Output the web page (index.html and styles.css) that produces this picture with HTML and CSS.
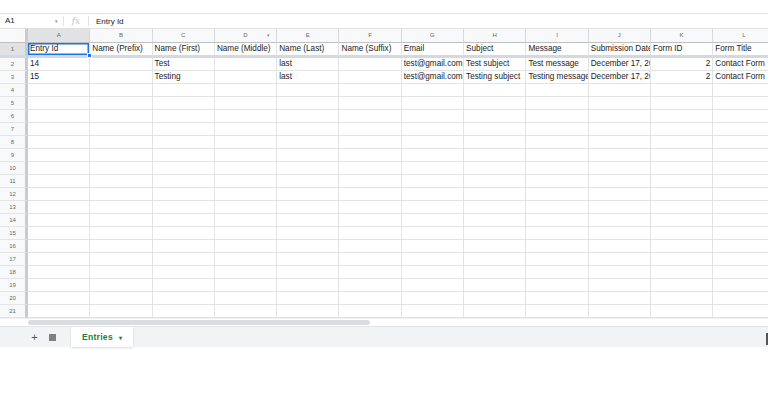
FILE: index.html
```html
<!DOCTYPE html>
<html lang="en">
<head>
    <meta charset="UTF-8">
    <meta name="viewport" content="width=device-width, initial-scale=1.0">
    <title>Entries</title>
    <link rel="stylesheet" href="styles.css">
</head>
<body>
    <div class="app">
        <div class="top-space"></div>
        <div class="formula-bar">
            <div class="name-box">A1<span class="caret">▾</span></div>
            <div class="fx">fx</div>
            <div class="formula">Entry Id</div>
        </div>
        <div class="sheet" id="sheet">
            <div class="corner"></div>
            <div class="col-head active">A</div>
            <div class="col-head">B</div>
            <div class="col-head">C</div>
            <div class="col-head has-filter">D<span class="filter">▾</span></div>
            <div class="col-head">E</div>
            <div class="col-head">F</div>
            <div class="col-head">G</div>
            <div class="col-head">H</div>
            <div class="col-head">I</div>
            <div class="col-head">J</div>
            <div class="col-head">K</div>
            <div class="col-head">L</div>

            <div class="row-head frozen active">1</div>
            <div class="cell frozen selected">Entry Id<span class="handle"></span></div>
            <div class="cell frozen">Name (Prefix)</div>
            <div class="cell frozen">Name (First)</div>
            <div class="cell frozen">Name (Middle)</div>
            <div class="cell frozen">Name (Last)</div>
            <div class="cell frozen">Name (Suffix)</div>
            <div class="cell frozen">Email</div>
            <div class="cell frozen">Subject</div>
            <div class="cell frozen">Message</div>
            <div class="cell frozen">Submission Date</div>
            <div class="cell frozen">Form ID</div>
            <div class="cell frozen">Form Title</div>

            <div class="row-head">2</div>
            <div class="cell">14</div>
            <div class="cell"></div>
            <div class="cell">Test</div>
            <div class="cell"></div>
            <div class="cell">last</div>
            <div class="cell"></div>
            <div class="cell">test@gmail.com</div>
            <div class="cell">Test subject</div>
            <div class="cell">Test message</div>
            <div class="cell">December 17, 2024</div>
            <div class="cell num">2</div>
            <div class="cell">Contact Form</div>

            <div class="row-head">3</div>
            <div class="cell">15</div>
            <div class="cell"></div>
            <div class="cell">Testing</div>
            <div class="cell"></div>
            <div class="cell">last</div>
            <div class="cell"></div>
            <div class="cell">test@gmail.com</div>
            <div class="cell">Testing subject</div>
            <div class="cell">Testing message</div>
            <div class="cell">December 17, 2024</div>
            <div class="cell num">2</div>
            <div class="cell">Contact Form</div>
        </div>
        <div class="scroll-row">
            <div class="scroll-thumb"></div>
        </div>
        <div class="tab-bar">
            <span class="add-sheet">+</span>
            <span class="all-sheets"></span>
            <div class="tab">Entries <span class="tab-caret">▾</span></div>
            <span class="explore"></span>
        </div>
    </div>
    <script>
        const sheet = document.getElementById("sheet");
        for (let r = 4; r <= 22; r++) {
            const head = document.createElement("div");
            head.classList.add("row-head");
            head.textContent = r;
            sheet.appendChild(head);
            for (let c = 0; c < 12; c++) {
                const cell = document.createElement("div");
                cell.classList.add("cell");
                sheet.appendChild(cell);
            }
        }
    </script>
</body>
</html>
```

FILE: styles.css
```css
* {
    margin: 0;
    padding: 0;
    box-sizing: border-box;
}

body {
    font-family: 'Liberation Sans', Arial, sans-serif;
    background: #ffffff;
    color: #222;
    width: 768px;
    height: 393px;
    overflow: hidden;
}

.app {
    display: flex;
    flex-direction: column;
    width: 768px;
}

.top-space {
    height: 13px;
}

.formula-bar {
    display: flex;
    align-items: center;
    height: 15px;
    border-top: 1px solid #e3e3e3;
    font-size: 8px;
    color: #222;
}

.name-box {
    width: 64px;
    padding-left: 5px;
    display: flex;
    justify-content: space-between;
    padding-right: 5px;
    border-right: 1px solid #e3e3e3;
    height: 10px;
    line-height: 10px;
}

.caret {
    font-size: 5px;
    color: #888;
}

.fx {
    width: 25px;
    text-align: center;
    font-family: 'DejaVu Serif', serif;
    font-style: italic;
    font-size: 9px;
    color: #c4c4c4;
    border-right: 1px solid #e3e3e3;
    height: 10px;
    line-height: 10px;
}

.formula {
    padding-left: 7px;
}

.sheet {
    display: grid;
    grid-template-columns: 28px repeat(12, 62.3px);
    grid-template-rows: 14px 15px;
    grid-auto-rows: 13px;
    height: 290px;
    overflow: hidden;
    border-top: 1px solid #e0e0e0;
}

.corner {
    background: #f8f9fa;
    border-right: 3px solid #c8cbd0;
    border-bottom: 1px solid #c0c0c0;
}

.col-head {
    background: #f8f9fa;
    border-right: 1px solid #d8d8d8;
    border-bottom: 1px solid #c0c0c0;
    font-size: 6px;
    color: #666;
    text-align: center;
    line-height: 13px;
    position: relative;
}

.col-head.active {
    background: #e1e2e4;
}

.filter {
    position: absolute;
    right: 6px;
    top: 0;
    font-size: 5px;
    color: #888;
}

.row-head {
    background: #f8f9fa;
    border-right: 3px solid #c8cbd0;
    border-bottom: 1px solid #e4e4e4;
    font-size: 6px;
    color: #666;
    text-align: center;
    line-height: 12px;
}

.row-head.active {
    background: #e1e2e4;
}

.row-head.frozen,
.cell.frozen {
    border-bottom: 3px solid #d3d8e2;
}

.cell {
    border-right: 1px solid #e2e3e3;
    border-bottom: 1px solid #e2e3e3;
    font-size: 8.2px;
    line-height: 12px;
    padding-left: 2px;
    white-space: nowrap;
    overflow: hidden;
    color: #222;
}

.cell.num {
    text-align: right;
    padding-right: 2px;
}

.cell.selected {
    position: relative;
    overflow: visible;
    box-shadow: inset 0 0 0 1.5px #1a73e8;
}

.handle {
    position: absolute;
    right: -3px;
    bottom: -3px;
    width: 5px;
    height: 5px;
    background: #1a73e8;
    border: 1px solid #fff;
}

.scroll-row {
    height: 8px;
    padding: 1px 0 0 28px;
    border-top: 1px solid #eeeeee;
}

.scroll-thumb {
    width: 342px;
    height: 5px;
    background: #dadce0;
    border-radius: 3px;
}

.tab-bar {
    display: flex;
    align-items: stretch;
    height: 21px;
    background: #f1f3f4;
    border-top: 1px solid #e4e4e4;
    position: relative;
}

.add-sheet {
    margin-left: 29px;
    width: 11px;
    font-size: 11px;
    line-height: 20px;
    color: #555;
    text-align: center;
}

.all-sheets {
    margin-left: 9px;
    margin-top: 7px;
    width: 7px;
    height: 7px;
    background: #808080;
}

.tab {
    margin-left: 15px;
    width: 62px;
    background: #ffffff;
    color: #188038;
    font-size: 8.5px;
    font-weight: bold;
    letter-spacing: 0.3px;
    line-height: 20px;
    padding-left: 11px;
    box-shadow: 0 1px 2px rgba(0, 0, 0, 0.15);
}

.tab-caret {
    font-size: 6px;
    margin-left: 3px;
}

.explore {
    position: absolute;
    right: 0;
    top: 6px;
    width: 2px;
    height: 12px;
    background: #555;
}
```
